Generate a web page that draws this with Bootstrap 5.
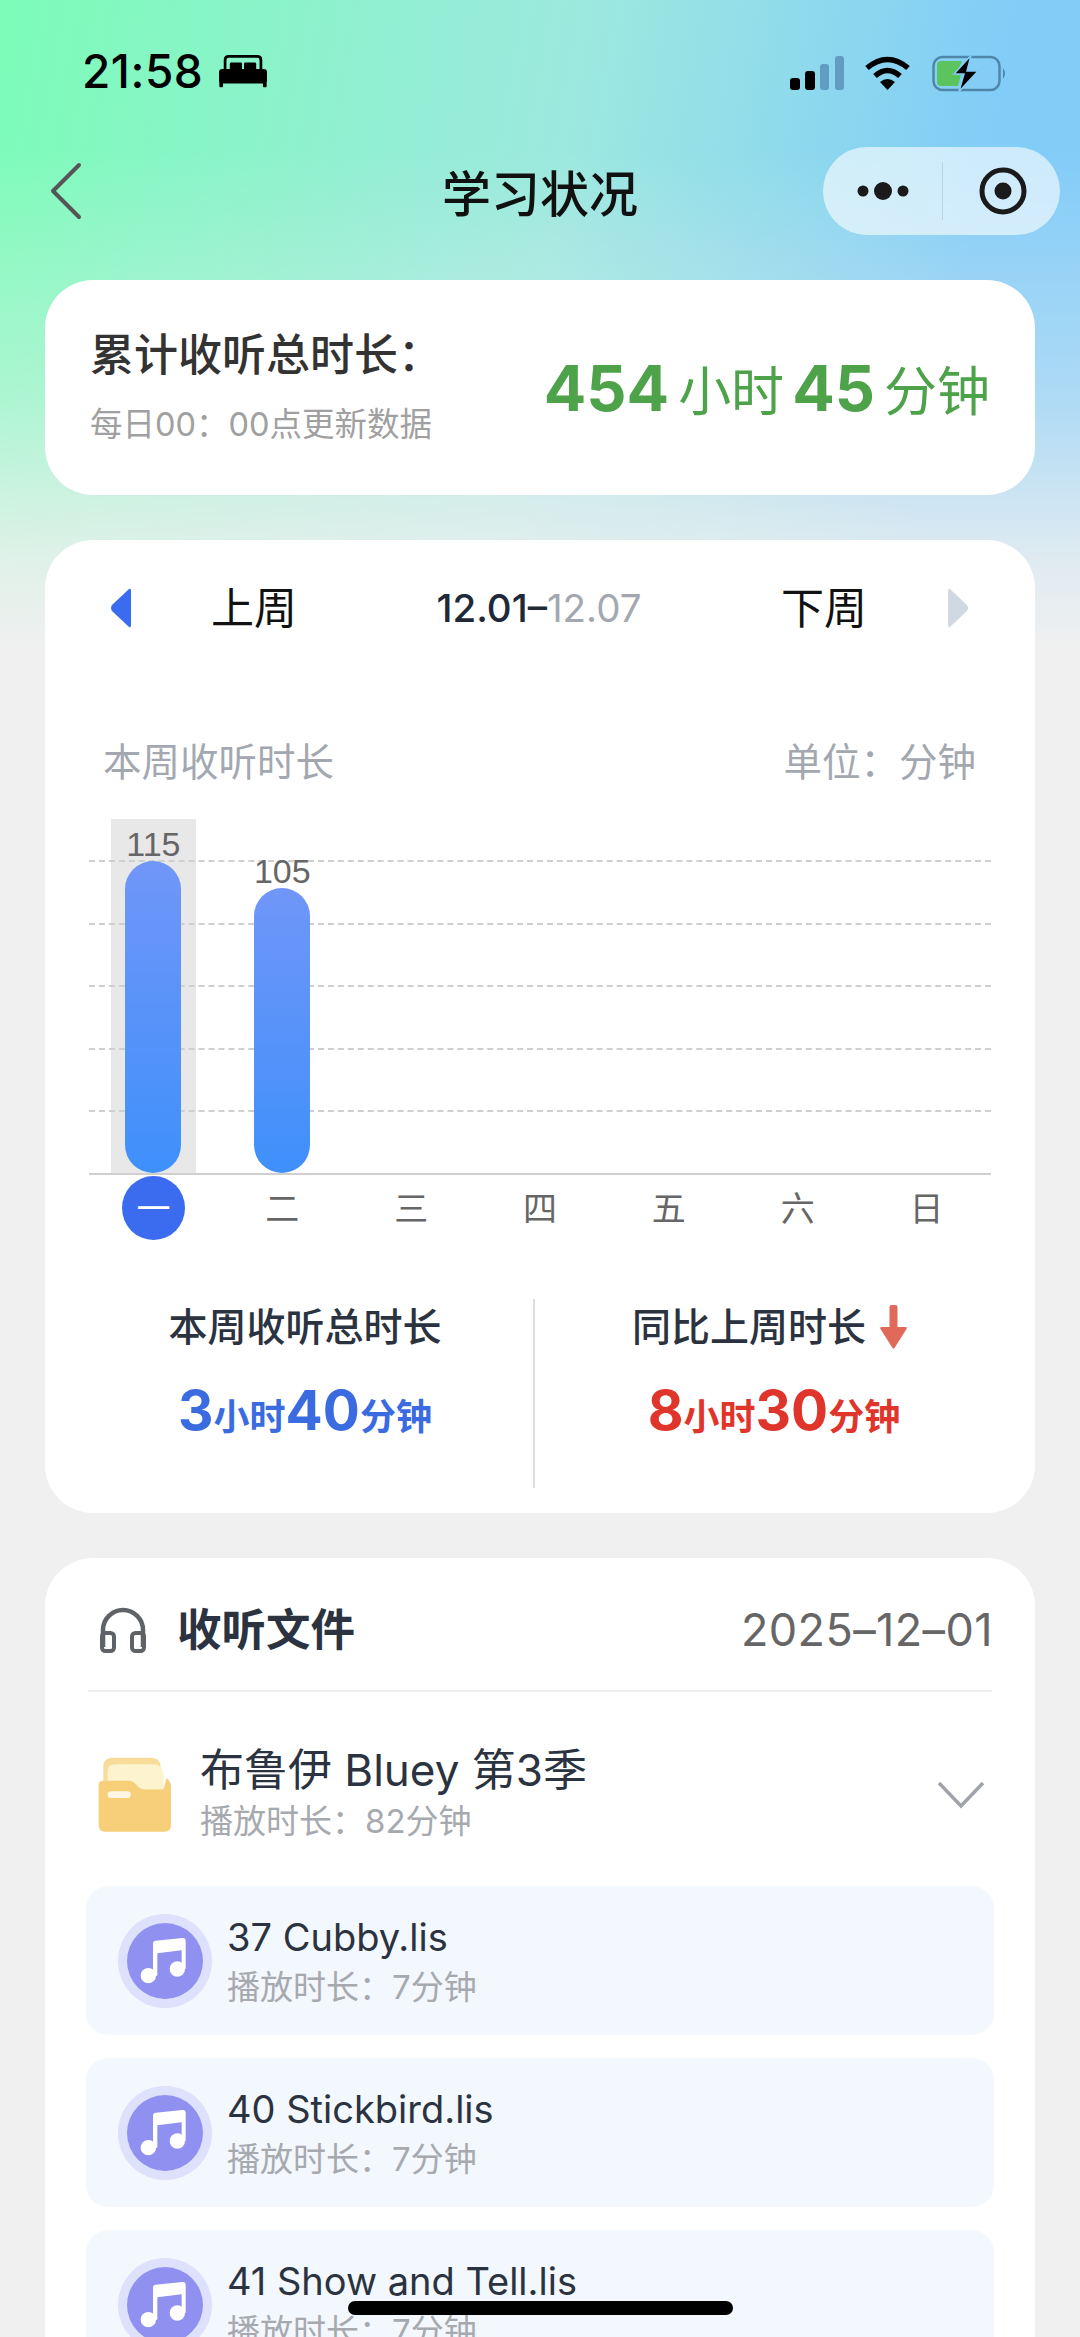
<!DOCTYPE html>
<html lang="zh-CN">
<head>
    <meta charset="UTF-8">
    <meta name="viewport" content="width=device-width, initial-scale=1.0">
    <title>学习状况</title>
    <link rel="stylesheet" href="https://cdn.jsdelivr.net/npm/bootstrap@5.3.0/dist/css/bootstrap.min.css">
    <style>
        html, body { height: 2337px; overflow: hidden; }
        body {
            font-family: Inter, "Noto Sans CJK SC", sans-serif;
            color: #2b3340;
            background-color: #f0f0f0;
            background-image: linear-gradient(to bottom, rgba(240,240,240,0) 150px, rgba(240,240,240,.4) 400px, rgba(240,240,240,.85) 560px, #f0f0f0 650px), linear-gradient(100deg, #7cfcb8 0, #9ce8df 50%, #82ccf8 85%, #82ccf8 100%);
            background-size: 100% 650px;
            background-repeat: no-repeat;
        }
        .cn-colon { font-family: Inter, "Noto Sans CJK TC", sans-serif; }
        .status-bar { height: 147px; padding: 54px 70px 0 82px; align-items: flex-start; }
        .status-time { font-size: 46px; font-weight: 500; line-height: 34px; color: #000; letter-spacing: .5px; }
        .title-bar { height: 88px; padding: 0 20px; display: grid; grid-template-columns: 1fr auto 1fr; align-items: center; }
        .page-title { font-size: 49px; font-weight: 500; color: #111; line-height: 1; padding-top: 6px; }
        .capsule { width: 237px; height: 88px; border-radius: 44px; background: rgba(255,255,255,.6); }
        .capsule-sep { width: 1px; height: 58px; background: rgba(0,0,0,.1); }
        .panel { background: #fff; border-radius: 48px; margin: 0 45px; }
        .panel-total { height: 215px; margin-top: 45px; padding: 0 45px; }
        .total-title { font-size: 44px; font-weight: 500; line-height: 50px; color: #333; }
        .total-sub { font-size: 32.5px; line-height: 40px; color: #a0a0a0; margin-top: 25px; }
        .total-value { color: #4ea24a; font-size: 53px; line-height: 70px; white-space: nowrap; padding-top: 4px; }
        .total-value b { font-size: 63px; font-weight: 700; margin: 0 9px 0 0; }
        .panel-week { height: 973px; margin-top: 45px; padding-top: 48px; }
        .week-nav { height: 40px; padding: 0 66px 0 65px; font-size: 43px; line-height: 40px; color: #111; }
        .week-range { font-size: 38.500px; font-weight: 500; color: #1f2937; }
        .week-range span { color: #a3a8b0; font-weight: 400; }
        .chart-head { margin: 111px 59px 0 58px; font-size: 38.5px; line-height: 46px; color: #a3a8b0; }
        .chart-plot { position: relative; height: 356px; margin: 34px 44px 0; border-bottom: 2px solid #cfcfcf; }
        .grid-lines { position: absolute; top: 41px; left: 0; right: 0; }
        .grid-lines div { height: 62.6px; border-top: 2px dashed #cfcfcf; }
        .day-cols { display: grid; grid-template-columns: repeat(7, 1fr); }
        .chart-cols { height: 100%; }
        .bar-slot { width: 85px; height: 100%; }
        .bar-slot.on { background: #e8e8e8; }
        .bar-label { position: relative; font-family: "Liberation Sans", sans-serif; font-size: 34px; line-height: 34px; color: #666; }
        .bar-fill { position: relative; width: 56px; border-radius: 28px; background: linear-gradient(to bottom, #7096f8, #3f90fb); }
        .day-row { margin: 1px 44px 0; height: 64px; font-size: 34px; color: #666; }
        .day-on { width: 63px; height: 64px; border-radius: 50%; background: #3b6cf0; color: #fff; }
        .stat-row { height: 189px; margin: 59px 22px 0 32px; }
        .stat-half { width: 456px; flex: none; padding-top: 8px; }
        .stat-half + .stat-half { flex: 1; border-left: 2px solid #dcdcdc; }
        .stat-title { font-size: 39px; font-weight: 500; line-height: 40px; color: #2b3340; height: 40px; }
        .stat-value { font-size: 36px; font-weight: 700; line-height: 60px; margin-top: 33px; }
        .stat-value b { font-size: 55px; font-weight: 700; }
        .stat-blue { color: #3b6be0; }
        .stat-red { color: #e0352b; }
        .panel-files { margin-top: 45px; height: 779px; padding: 48px 41px 0; overflow: hidden; border-radius: 48px 48px 0 0; }
        .files-head { height: 48px; margin: 0 2px; }
        .files-title { font-size: 44.5px; font-weight: 700; line-height: 48px; color: #2b3340; }
        .files-date { font-size: 45px; color: #666; margin-right: -1px; letter-spacing: .4px; }
        .files-rule { height: 2px; background: #eeeeee; margin: 36px 2px 0; }
        .folder-row { margin: 65px 9px 53px 12px; height: 76px; }
        .folder-name { font-size: 44px; line-height: 50px; margin-top: -5px; color: #2b3340; }
        .sub-text { font-size: 33px; line-height: 40px; color: #a6a9ae; }
        .folder-name + .sub-text { margin-top: 6px; }
        .file-row { height: 149px; border-radius: 22px; background: #f3f7fe; margin-bottom: 23px; padding: 0 32px; gap: 15px; }
        .note-ring { width: 94px; height: 94px; border-radius: 50%; background: #dde1fb; }
        .file-name { font-size: 38px; line-height: 44px; color: #2b3340; }
        .file-name + .sub-text { margin-top: 8px; }
        .home-bar { position: absolute; left: 348px; top: 2301px; width: 385px; height: 14px; border-radius: 7px; background: #000; }
    </style>
</head>
<body>
    <div class="status-bar d-flex justify-content-between">
        <div class="d-flex align-items-center gap-3">
            <span class="status-time">21:58</span>
            <svg width="48" height="34" viewBox="660 78 142 100"><path d="M678 125V96Q678 85 689 85H773Q784 85 784 96V125" fill="none" stroke="#000" stroke-width="8"/><rect x="692" y="103" width="36" height="22" rx="4"/><rect x="734" y="103" width="36" height="22" rx="4"/><rect x="660" y="122" width="142" height="43" rx="10"/><rect x="661" y="160" width="11" height="16" rx="3"/><rect x="790" y="160" width="11" height="16" rx="3"/></svg>
        </div>
        <svg width="250" height="38" viewBox="760 52 250 38" class="d-block">
            <rect x="790" y="76" width="10" height="12" rx="3"/>
            <rect x="805" y="69" width="10" height="19" rx="3"/>
            <rect x="820" y="62" width="9" height="26" rx="3" fill="#5f9dc2"/>
            <rect x="835" y="54" width="9" height="34" rx="3" fill="#5f9dc2"/>
            <path d="M867 66Q887.500 49 908 66" fill="none" stroke="#000" stroke-width="5.500"/>
            <path d="M875 74Q887.500 63 900 74" fill="none" stroke="#000" stroke-width="5.500"/>
            <path d="M880 80Q887.500 74 895 80L887.500 88Z"/>
            <rect x="933.500" y="55" width="66" height="33" rx="9" fill="none" stroke="#4f86a8" stroke-width="2.500"/>
            <path d="M937 63Q937 59 941 59H962L956 73H961L958 84H941Q937 84 937 80Z" fill="#5cc45c"/>
            <path d="M1003 66Q1007 71.500 1003 77Z" fill="#4f86a8"/>
            <path d="M971 53.500L954 72H964L959 89.500L978 69H967Z" stroke="#82ccf8" stroke-width="1.500"/>
        </svg>
    </div>

    <div class="title-bar">
        <svg width="34" height="60" viewBox="0 0 34 60" style="margin-left:29px"><path d="M30 4L4 30L30 56" fill="none" stroke="#555" stroke-width="4" stroke-linecap="round" stroke-linejoin="round"/></svg>
        <div class="page-title">学习状况</div>
        <div class="capsule d-flex align-items-center ms-auto">
            <svg width="119" height="30" viewBox="0 0 119 30" class="flex-shrink-0"><circle cx="40" cy="15" r="5.500" fill="#1a1a1a"/><circle cx="60" cy="15" r="9" fill="#1a1a1a"/><circle cx="80" cy="15" r="5.500" fill="#1a1a1a"/></svg>
            <div class="capsule-sep"></div>
            <svg width="117" height="50" viewBox="0 0 117 50" class="flex-shrink-0"><circle cx="60" cy="25" r="21" fill="none" stroke="#1a1a1a" stroke-width="5"/><circle cx="60" cy="25" r="8.500" fill="#1a1a1a"/></svg>
        </div>
    </div>

    <div class="panel panel-total d-flex justify-content-between align-items-center">
        <div>
            <div class="total-title">累计收听总时长<span class="cn-colon">：</span></div>
            <div class="total-sub">每日00<span class="cn-colon">：</span>00点更新数据</div>
        </div>
        <div class="total-value"><b>454</b>小时<b class="ms-2">45</b>分钟</div>
    </div>

    <div class="panel panel-week">
        <div class="week-nav d-flex justify-content-between align-items-center">
            <div class="d-flex align-items-center" style="gap:79px">
                <svg width="22" height="40" viewBox="0 0 22 40" class="d-block"><path d="M19 1Q21 0 21 3V37Q21 40 19 39L2 23Q0 20 2 17Z" fill="#3b6cf0"/></svg>
                <span>上周</span>
            </div>
            <div class="week-range">12.01–<span>12.07</span></div>
            <div class="d-flex align-items-center" style="gap:80px">
                <span>下周</span>
                <svg width="22" height="40" viewBox="0 0 22 40" class="d-block"><path d="M3 1Q1 0 1 3V37Q1 40 3 39L20 23Q22 20 20 17Z" fill="#d0d8e2"/></svg>
            </div>
        </div>

        <div class="chart-head d-flex justify-content-between">
            <span>本周收听时长</span>
            <span>单位<span class="cn-colon">：</span>分钟</span>
        </div>

        <div class="chart-plot">
            <div class="grid-lines"><div></div><div></div><div></div><div></div><div></div></div>
            <div class="day-cols chart-cols">
                <div class="d-flex justify-content-center">
                    <div class="bar-slot on d-flex flex-column justify-content-end align-items-center">
                        <div class="bar-label">115</div>
                        <div class="bar-fill" style="height:312px"></div>
                    </div>
                </div>
                <div class="d-flex justify-content-center">
                    <div class="bar-slot d-flex flex-column justify-content-end align-items-center">
                        <div class="bar-label">105</div>
                        <div class="bar-fill" style="height:285px"></div>
                    </div>
                </div>
            </div>
        </div>

        <div class="day-cols day-row text-center">
            <div class="d-flex justify-content-center align-items-center"><span class="day-on d-flex justify-content-center align-items-center">一</span></div>
            <div class="d-flex justify-content-center align-items-center">二</div>
            <div class="d-flex justify-content-center align-items-center">三</div>
            <div class="d-flex justify-content-center align-items-center">四</div>
            <div class="d-flex justify-content-center align-items-center">五</div>
            <div class="d-flex justify-content-center align-items-center">六</div>
            <div class="d-flex justify-content-center align-items-center">日</div>
        </div>

        <div class="stat-row d-flex text-center">
            <div class="stat-half">
                <div class="stat-title">本周收听总时长</div>
                <div class="stat-value stat-blue"><b>3</b>小时<b>40</b>分钟</div>
            </div>
            <div class="stat-half">
                <div class="stat-title d-flex justify-content-center align-items-center pe-2" style="gap:13px">同比上周时长
                    <svg width="29" height="44" viewBox="0 0 28 44" class="d-block"><path d="M10 2Q10 0 12 0H16Q18 0 18 2V22H26Q28 22 27 24L15 43Q14 44 13 43L1 24Q0 22 2 22H10Z" fill="#e0695a"/></svg>
                </div>
                <div class="stat-value stat-red"><b>8</b>小时<b>30</b>分钟</div>
            </div>
        </div>
    </div>

    <div class="panel panel-files">
        <div class="files-head d-flex justify-content-between align-items-center">
            <div class="d-flex align-items-center">
                <svg width="48" height="46" viewBox="0 0 48 46" class="d-block" style="margin-left:11px"><path d="M4 40V23A20 20 0 0 1 44 23V40" fill="none" stroke="#5f6368" stroke-width="4.500"/><rect x="3" y="26" width="12" height="18" rx="3.500" fill="none" stroke="#5f6368" stroke-width="4"/><rect x="33" y="26" width="12" height="18" rx="3.500" fill="none" stroke="#5f6368" stroke-width="4"/></svg>
                <span class="files-title" style="margin-left:30px">收听文件</span>
            </div>
            <span class="files-date">2025–12–01</span>
        </div>
        <div class="files-rule"></div>

        <div class="folder-row d-flex justify-content-between align-items-center">
            <div class="d-flex align-items-center" style="gap:28px">
                <svg width="74" height="76" viewBox="56 106 224 230" class="d-block"><path d="M72 190V135Q72 108 100 108H215Q245 108 245 135V190Z" fill="#f8dd9a"/><path d="M85 180V150Q85 128 108 128H225Q250 128 255 160V210H85Z" fill="#fdf3cf"/><path d="M58 190Q58 178 72 178H150Q162 178 172 190Q182 204 198 204H250Q258 204 262 170Q277 178 277 195V312Q277 332 257 332H78Q58 332 58 312Z" fill="#f6cf78"/><rect x="85" y="210" width="70" height="20" rx="10" fill="#fff7e3"/></svg>
                <div>
                    <div class="folder-name">布鲁伊 Bluey 第3季</div>
                    <div class="sub-text">播放时长<span class="cn-colon">：</span>82分钟</div>
                </div>
            </div>
            <svg width="48" height="28" viewBox="0 0 48 28" class="d-block"><path d="M2 2L24 25L46 2" fill="none" stroke="#a0a4aa" stroke-width="3.500"/></svg>
        </div>

        <div class="file-row d-flex align-items-center">
            <div class="note-ring d-flex justify-content-center align-items-center flex-shrink-0"><svg width="76" height="76" viewBox="144 610 228 228"><circle cx="258" cy="724" r="114" fill="#8f90f0"/><path d="M222 672Q222 664 230 663L310 655Q320 654 320 664V748H308V692L235 701V768H222Z" fill="#fff"/><circle cx="208" cy="768" r="23" fill="#fff"/><circle cx="295" cy="748" r="23" fill="#fff"/></svg></div>
            <div>
                <div class="file-name">37 Cubby.lis</div>
                <div class="sub-text">播放时长<span class="cn-colon">：</span>7分钟</div>
            </div>
        </div>
        <div class="file-row d-flex align-items-center">
            <div class="note-ring d-flex justify-content-center align-items-center flex-shrink-0"><svg width="76" height="76" viewBox="144 610 228 228"><circle cx="258" cy="724" r="114" fill="#8f90f0"/><path d="M222 672Q222 664 230 663L310 655Q320 654 320 664V748H308V692L235 701V768H222Z" fill="#fff"/><circle cx="208" cy="768" r="23" fill="#fff"/><circle cx="295" cy="748" r="23" fill="#fff"/></svg></div>
            <div>
                <div class="file-name">40 Stickbird.lis</div>
                <div class="sub-text">播放时长<span class="cn-colon">：</span>7分钟</div>
            </div>
        </div>
        <div class="file-row d-flex align-items-center">
            <div class="note-ring d-flex justify-content-center align-items-center flex-shrink-0"><svg width="76" height="76" viewBox="144 610 228 228"><circle cx="258" cy="724" r="114" fill="#8f90f0"/><path d="M222 672Q222 664 230 663L310 655Q320 654 320 664V748H308V692L235 701V768H222Z" fill="#fff"/><circle cx="208" cy="768" r="23" fill="#fff"/><circle cx="295" cy="748" r="23" fill="#fff"/></svg></div>
            <div>
                <div class="file-name">41 Show and Tell.lis</div>
                <div class="sub-text">播放时长<span class="cn-colon">：</span>7分钟</div>
            </div>
        </div>
    </div>

    <div class="home-bar"></div>

    <script src="https://cdn.jsdelivr.net/npm/bootstrap@5.3.0/dist/js/bootstrap.bundle.min.js"></script>
</body>
</html>
